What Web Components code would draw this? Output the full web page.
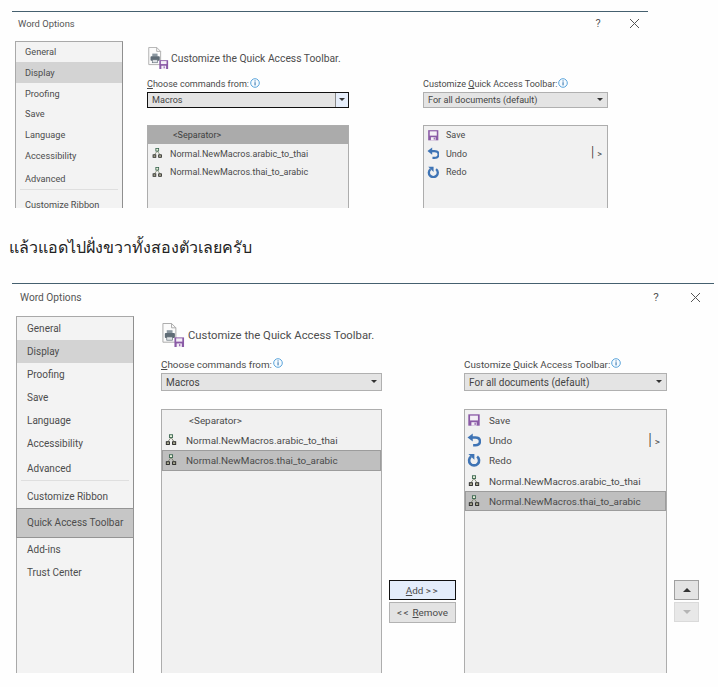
<!DOCTYPE html>
<html lang="en">
<head>
<meta charset="utf-8">
<title>Word Options</title>
<style>
  html, body { margin: 0; padding: 0; background: #fefefe; }
  body { width: 718px; height: 687px; overflow: hidden; font-family: Roboto, "Open Sans", sans-serif; color: #4a4a4a; padding-top: 11px; box-sizing: border-box; }
  word-dialog.small {
    --dlg-w: 636px; --dlg-h: 197px; --title-h: 29px; --title-x: 6px; --title-size: 9.4px; --title-lift: 6px;
    --close-w: 28px; --help-w: 44px;
    --nav-x: 3px; --nav-w: 108px; --nav-row: 20.7px; --nav-size: 9.2px; --nav-pad: 9px; --nav-top: -.5px; --adv-gap: 3px; --rule-gap: 3.5px;
    --pane-x: 24px; --col-l: 201.5px; --col-m: 74.5px; --col-r: 185px;
    --head-h: 29px; --head-top: 6px; --head-drop: 1px; --icon-w: 22px; --head-gap: 2px; --head-size: 10.3px;
    --label-h: 16px; --label-lift: 0px; --label-size: 9.05px; --sel-h: 15.5px; --sel-size: 9.1px; --sel-pad: 4px; --list-gap: 17px;
    --row-h: 18.6px; --row-size: 9px; --row-icon: 12.5px; --row-text: 22px; --end-pad: 5px;
  }
  word-dialog.large {
    --dlg-w: 702px; --dlg-h: 390px; --title-h: 32px; --title-x: 8px; --title-size: 10.2px; --title-lift: 6px;
    --close-w: 38px; --help-w: 40px;
    --nav-x: 4px; --nav-w: 118px; --nav-row: 23px; --nav-size: 10px; --nav-pad: 10px; --nav-top: 0px; --adv-gap: 2px; --rule-gap: 4px;
    --pane-x: 27px; --col-l: 221px; --col-m: 82px; --col-r: 203px;
    --head-h: 33px; --head-top: 7px; --head-drop: 1px; --icon-w: 24px; --head-gap: 3px; --head-size: 11.3px;
    --label-h: 17px; --label-lift: 1px; --label-size: 9.85px; --sel-h: 17.5px; --sel-size: 10px; --sel-pad: 4px; --list-gap: 18.5px;
    --row-h: 20.2px; --row-size: 9.9px; --row-icon: 14px; --row-text: 24px; --end-pad: 6px;
  }
  .bar-mark { font-size: 1.6em; font-weight: 300; color: #222; margin-right: 3px; line-height: .8; }
  .spaced { letter-spacing: 1.5px; }
</style>
</head>
<body>

<word-dialog class="small">
  <span slot="title">Word Options</span>
  <opt-nav slot="nav">
    <nav-item>General</nav-item>
    <nav-item hot>Display</nav-item>
    <nav-item>Proofing</nav-item>
    <nav-item>Save</nav-item>
    <nav-item>Language</nav-item>
    <nav-item>Accessibility</nav-item>
    <nav-item gap>Advanced</nav-item>
    <nav-rule></nav-rule>
    <nav-item>Customize Ribbon</nav-item>
  </opt-nav>
  <qat-pane>
    <span slot="from"><u>C</u>hoose commands from:</span>
    <drop-select slot="from-select" focused>Macros</drop-select>
    <cmd-list slot="from-list">
      <cmd-row class="sep" mark>&lt;Separator&gt;</cmd-row>
      <cmd-row icon="macro">Normal.NewMacros.arabic_to_thai</cmd-row>
      <cmd-row icon="macro">Normal.NewMacros.thai_to_arabic</cmd-row>
    </cmd-list>
    <span slot="to">Customize <u>Q</u>uick Access Toolbar:</span>
    <drop-select slot="to-select">For all documents (default)</drop-select>
    <cmd-list slot="to-list">
      <cmd-row icon="save">Save</cmd-row>
      <cmd-row icon="undo">Undo<span slot="end"><span class="bar-mark">|</span>&gt;</span></cmd-row>
      <cmd-row icon="redo">Redo</cmd-row>
    </cmd-list>
  </qat-pane>
</word-dialog>

<forum-line>แล้วแอดไปฝั่งขวาทั้งสองตัวเลยครับ</forum-line>

<word-dialog class="large">
  <span slot="title">Word Options</span>
  <opt-nav slot="nav">
    <nav-item>General</nav-item>
    <nav-item hot>Display</nav-item>
    <nav-item>Proofing</nav-item>
    <nav-item>Save</nav-item>
    <nav-item>Language</nav-item>
    <nav-item>Accessibility</nav-item>
    <nav-item gap>Advanced</nav-item>
    <nav-rule></nav-rule>
    <nav-item>Customize Ribbon</nav-item>
    <nav-item selected>Quick Access Toolbar</nav-item>
    <nav-item>Add-ins</nav-item>
    <nav-item>Trust Center</nav-item>
  </opt-nav>
  <qat-pane>
    <span slot="from"><u>C</u>hoose commands from:</span>
    <drop-select slot="from-select">Macros</drop-select>
    <cmd-list slot="from-list">
      <cmd-row mark>&lt;Separator&gt;</cmd-row>
      <cmd-row icon="macro">Normal.NewMacros.arabic_to_thai</cmd-row>
      <cmd-row icon="macro" selected>Normal.NewMacros.thai_to_arabic</cmd-row>
    </cmd-list>
    <dlg-button slot="middle" focused><u>A</u>dd <span class="spaced">&gt;&gt;</span></dlg-button>
    <dlg-button slot="middle" tall><span class="spaced">&lt;&lt;</span> <u>R</u>emove</dlg-button>
    <span slot="to">Customize <u>Q</u>uick Access Toolbar:</span>
    <drop-select slot="to-select">For all documents (default)</drop-select>
    <cmd-list slot="to-list">
      <cmd-row icon="save">Save</cmd-row>
      <cmd-row icon="undo">Undo<span slot="end"><span class="bar-mark">|</span>&gt;</span></cmd-row>
      <cmd-row icon="redo">Redo</cmd-row>
      <cmd-row icon="macro">Normal.NewMacros.arabic_to_thai</cmd-row>
      <cmd-row icon="macro" selected>Normal.NewMacros.thai_to_arabic</cmd-row>
    </cmd-list>
    <dlg-button slot="order" arrow="up"></dlg-button>
    <dlg-button slot="order" arrow="down" disabled></dlg-button>
  </qat-pane>
</word-dialog>

<script>
const ICONS = {
  macro: `<g fill="none" stroke-width="1"><path d="M8 5.2L4.4 10M8 5.2L11.6 10" stroke="#7a8068"/><rect x="6.2" y="2" width="3.6" height="3.2" stroke="#35614c" fill="#e6efd8"/><rect x="2.6" y="10" width="3.6" height="3.2" stroke="#222" fill="#a8a890"/><rect x="9.8" y="10" width="3.6" height="3.2" stroke="#222" fill="#a8a890"/></g>`,
  save: `<path d="M1.5 1.5H14.5V14.5H1.5Z" fill="#8a5aa6"/><rect x="3.5" y="3" width="9" height="5.5" fill="#f4f0f6"/><rect x="5" y="10.5" width="6" height="4" fill="#f4f0f6"/><rect x="8.6" y="11" width="1.4" height="2.6" fill="#8a5aa6"/>`,
  undo: `<path d="M.6 5.2L6.6 .6V9.8Z" fill="#3f74b5"/><path d="M5.5 5.2H9.6C12.8 5.2 14.8 7 14.8 9.5C14.8 12 12.8 13.9 9.6 13.9H7" fill="none" stroke="#3f74b5" stroke-width="2.8"/>`,
  redo: `<path d="M4.6 4A5.7 5.7 0 1 0 11.6 4" fill="none" stroke="#3f74b5" stroke-width="3"/><path d="M1.6 1H8.4V7.8Z" fill="#3f74b5"/>`
};

// every element is the same little boilerplate: style + markup in an open root
class ShadowPart extends HTMLElement {
  constructor() {
    super();
    this.shadowDOM = this.attachShadow({mode: "open"});
  }
  connectedCallback() {
    this.render();
  }
}

class WordDialog extends ShadowPart {
  render() {
    this.shadowDOM.innerHTML = `
      <style>
        :host {
          display: block;
          width: var(--dlg-w);
          height: var(--dlg-h);
          margin-left: 12px;
          box-sizing: border-box;
          border-top: 1.5px solid #45606f;
          overflow: hidden;
          background: #fefefe;
        }
        .bar {
          height: var(--title-h);
          box-sizing: border-box;
          display: flex;
          align-items: center;
          padding-left: var(--title-x);
          padding-bottom: var(--title-lift);
          font-size: var(--title-size);
          color: #555;
        }
        .title { flex: 1; }
        .help { width: var(--help-w); text-align: center; font-size: calc(var(--title-size) + 1.5px); color: #555; }
        .close { width: var(--close-w); display: flex; justify-content: center; }
        .body { display: flex; align-items: stretch; height: 100%; }
      </style>
      <div class="bar">
        <div class="title"><slot name="title"></slot></div>
        <div class="help">?</div>
        <div class="close"><svg width="11" height="11" viewBox="0 0 11 11"><path d="M1 1L10 10M10 1L1 10" stroke="#555" stroke-width="1"/></svg></div>
      </div>
      <div class="body"><slot name="nav"></slot><slot></slot></div>`;
  }
}

class OptNav extends ShadowPart {
  render() {
    this.shadowDOM.innerHTML = `
      <style>
        :host {
          display: block;
          flex: none;
          box-sizing: border-box;
          width: var(--nav-w);
          margin-left: var(--nav-x);
          height: 400px;
          background: #f3f3f3;
          border: 1px solid #a9a9a9;
          border-right-color: #8f8f8f;
          border-bottom: 0;
        }
        .items { display: flex; flex-direction: column; margin-top: var(--nav-top); }
      </style>
      <div class="items"><slot></slot></div>`;
  }
}

class NavItem extends ShadowPart {
  render() {
    this.shadowDOM.innerHTML = `
      <style>
        :host {
          display: flex;
          align-items: center;
          flex: none;
          box-sizing: border-box;
          height: var(--nav-row);
          padding-left: var(--nav-pad);
          font-size: var(--nav-size);
          color: #4d4d4d;
          white-space: nowrap;
        }
        :host([hot]) { background: #d3d3d3; }
        :host([gap]) { margin-top: var(--adv-gap); }
        :host([selected]) {
          height: 30px;
          padding-bottom: 2px;
          background: #c6c6c6;
          border: 1px solid #949494;
          margin: 0 -1px;
        }
      </style>
      <slot></slot>`;
  }
}

class NavRule extends ShadowPart {
  render() {
    this.shadowDOM.innerHTML = `
      <style>
        :host {
          display: block;
          flex: none;
          height: 1px;
          margin: 0 4px var(--rule-gap);
          background: #dfdfdf;
        }
      </style>`;
  }
}

class QatPane extends ShadowPart {
  render() {
    this.shadowDOM.innerHTML = `
      <style>
        :host {
          display: block;
          margin-left: var(--pane-x);
          padding-top: var(--head-top);
          color: #4a4a4a;
        }
        .head {
          display: flex;
          align-items: flex-start;
          gap: var(--head-gap);
          height: var(--head-h);
          font-size: var(--head-size);
          line-height: var(--icon-w);
          color: #4d4d4d;
        }
        .head span { padding-top: var(--head-drop); }
        .head svg { width: var(--icon-w); height: var(--icon-w); flex: none; }
        .grid {
          display: grid;
          grid-template-columns: var(--col-l) var(--col-m) var(--col-r) 40px;
          grid-template-rows: var(--label-h) var(--sel-h) auto;
        }
        .label { display: flex; align-items: center; gap: 1px; font-size: var(--label-size); white-space: nowrap; padding-bottom: var(--label-lift); box-sizing: border-box; }
        .list { margin-top: var(--list-gap); height: 400px; }
        .mid { margin-top: var(--list-gap); padding: 171px 8px 0 7px; display: flex; flex-direction: column; gap: 2px; box-sizing: border-box; }
        .order { margin-top: var(--list-gap); padding: 171px 0 0 7px; display: flex; flex-direction: column; gap: 2px; }
        .order ::slotted(*) { width: 25px; }
      </style>
      <div class="head">
        <svg viewBox="0 0 24 25">
          <path d="M1.5 .5H10.5L15 5V20H1.5Z" fill="#fbfbfb" stroke="#a8a8a8" stroke-width="1"/>
          <path d="M10.5 .5V5H15" fill="none" stroke="#a8a8a8" stroke-width="1"/>
          <rect x="5.5" y="7.5" width="6" height="3.5" fill="#8b97a0"/>
          <rect x="3.5" y="10.5" width="10.5" height="5" rx="1" fill="#5f6c76"/>
          <rect x="5.5" y="14.5" width="6" height="3.4" fill="#dfe3e6" stroke="#5f6c76" stroke-width=".7"/>
          <rect x="13.5" y="15" width="10" height="10" fill="#8a5aa6"/>
          <rect x="15.3" y="16" width="6.4" height="3.4" fill="#f4eef7"/>
          <rect x="15.8" y="21.3" width="5.4" height="3.7" fill="#f4eef7"/>
          <rect x="18.4" y="22" width="1.2" height="2.2" fill="#8a5aa6"/>
        </svg>
        <span>Customize the Quick Access Toolbar.</span>
      </div>
      <div class="grid">
        <div class="label"><slot name="from"></slot><info-dot></info-dot></div>
        <div></div>
        <div class="label"><slot name="to"></slot><info-dot></info-dot></div>
        <div></div>
        <slot name="from-select"></slot>
        <div></div>
        <slot name="to-select"></slot>
        <div></div>
        <div class="list"><slot name="from-list"></slot></div>
        <div class="mid"><slot name="middle"></slot></div>
        <div class="list"><slot name="to-list"></slot></div>
        <div class="order"><slot name="order"></slot></div>
      </div>`;
  }
}

class InfoDot extends ShadowPart {
  render() {
    this.shadowDOM.innerHTML = `
      <style>
        :host { display: inline-flex; width: 10px; height: 10px; margin-top: -3px; flex: none; }
      </style>
      <svg width="10" height="10" viewBox="0 0 10 10">
        <circle cx="5" cy="5" r="4.3" fill="#f6fbff" stroke="#4a9ad6" stroke-width=".9"/>
        <rect x="4.5" y="4.2" width="1.1" height="3.2" fill="#3b78b0"/>
        <rect x="4.5" y="2.4" width="1.1" height="1.1" fill="#3b78b0"/>
      </svg>`;
  }
}

class DropSelect extends ShadowPart {
  render() {
    this.shadowDOM.innerHTML = `
      <style>
        :host {
          display: flex;
          align-items: center;
          box-sizing: border-box;
          height: var(--sel-h);
          background: #e4e4e4;
          border: 1px solid #b0b0b0;
          font-size: var(--sel-size);
          color: #444;
          padding-left: var(--sel-pad);
        }
        :host([focused]) { border-color: #111; }
        .text { flex: 1; white-space: nowrap; padding-top: 1px; }
        .btn { width: 13px; align-self: stretch; display: flex; align-items: center; justify-content: center; margin-right: 1px; }
        :host([focused]) .btn { background: #e6eefb; border-left: 1px solid #888; width: 12px; margin-right: 0; }
        .tri { width: 0; height: 0; border: 3px solid transparent; border-top: 3px solid #333; border-bottom: 0; border-left-width: 3.5px; border-right-width: 3.5px; }
      </style>
      <div class="text"><slot></slot></div>
      <div class="btn"><div class="tri"></div></div>`;
  }
}

class CmdList extends ShadowPart {
  render() {
    this.shadowDOM.innerHTML = `
      <style>
        :host {
          display: block;
          box-sizing: border-box;
          height: 400px;
          background: #f1f1f1;
          border: 1px solid #adadad;
          border-bottom: 0;
        }
      </style>
      <slot></slot>`;
  }
}

class CmdRow extends ShadowPart {
  render() {
    const name = this.getAttribute("icon");
    const icon = name ? `<svg viewBox="0 0 16 16">${ICONS[name]}</svg>` : "";
    this.shadowDOM.innerHTML = `
      <style>
        :host {
          display: flex;
          align-items: center;
          box-sizing: border-box;
          height: var(--row-h);
          font-size: var(--row-size);
          color: #4a4a4a;
          white-space: nowrap;
        }
        :host([selected]) { background: #bfbfbf; outline: 1px solid #9c9c9c; outline-offset: -1px; }
        :host([mark]) { padding-left: 3px; }
        :host(.sep) { background: #ababab; color: #3f3f3f; }
        .ico { width: var(--row-text); flex: none; display: flex; box-sizing: border-box; padding-left: calc(9px - var(--row-icon) / 2); }
        svg { width: var(--row-icon); height: var(--row-icon); }
        .txt { flex: 1; padding-top: 1px; }
        .end { padding-right: var(--end-pad); }
      </style>
      ${name ? `<div class="ico">${icon}</div>` : `<div style="width:var(--row-text)"></div>`}
      <div class="txt"><slot></slot></div>
      <div class="end"><slot name="end"></slot></div>`;
  }
}

class DlgButton extends ShadowPart {
  render() {
    const arrow = this.getAttribute("arrow");
    const tri = arrow === "up"
      ? `<div style="border:4px solid transparent;border-top:0;border-bottom:4px solid #333"></div>`
      : arrow === "down"
        ? `<div style="border:4px solid transparent;border-bottom:0;border-top:4px solid #b5b5b5"></div>`
        : "<span><slot></slot></span>";
    this.shadowDOM.innerHTML = `
      <style>
        :host {
          display: flex;
          align-items: center;
          justify-content: center;
          box-sizing: border-box;
          height: 20px;
          background: #e3e3e3;
          border: 1px solid #b2b2b2;
          font-size: var(--row-size);
          color: #4a4a4a;
          white-space: nowrap;
        }
        :host([tall]) { height: 21px; }
        :host([focused]) { background: #e4edfb; border: 1.5px solid #111; }
        :host([arrow="up"]) { border-color: #a0a0a0; }
        :host([disabled]) { background: #e8e8e8; border-color: #dadada; }
      </style>
      ${tri}`;
  }
}

class ForumLine extends ShadowPart {
  render() {
    this.shadowDOM.innerHTML = `
      <style>
        :host {
          display: flex;
          align-items: center;
          box-sizing: border-box;
          height: 75px;
          padding: 3px 0 0 9px;
          font-family: "Noto Sans", "DejaVu Sans", sans-serif;
          font-size: 16px;
          color: #222;
        }
      </style>
      <slot></slot>`;
  }
}

customElements.define("word-dialog", WordDialog);
customElements.define("opt-nav", OptNav);
customElements.define("nav-item", NavItem);
customElements.define("nav-rule", NavRule);
customElements.define("qat-pane", QatPane);
customElements.define("info-dot", InfoDot);
customElements.define("drop-select", DropSelect);
customElements.define("cmd-list", CmdList);
customElements.define("cmd-row", CmdRow);
customElements.define("dlg-button", DlgButton);
customElements.define("forum-line", ForumLine);
</script>
</body>
</html>
